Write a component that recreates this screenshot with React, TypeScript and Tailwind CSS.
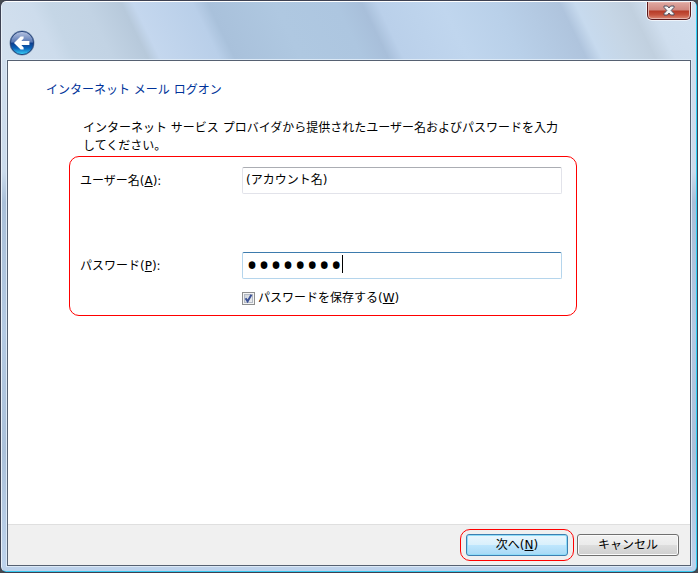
import React, { useState } from "react";

const barGlass =
  "bg-[linear-gradient(64deg,#d3e0ee_0px,#cddcec_50px,#c5d6e6_66px,#c2d3e4_100px,#b7c9db_132px,#c4d7ee_143px,#b9cfe9_196px,#a9c1db_210px,#afc8e1_270px,#adc6e0_325px,#a8bfda_348px,#bad0ea_362px,#c0d6ee_420px,#b9d0e9_468px,#afc4dd_526px,#c7daee_540px,#c6d6e6_565px,#c1d0df_588px,#cfdeee_606px,#d2e1f1_650px)]";

const sideGlass =
  "bg-[linear-gradient(180deg,#d3e0ee_0px,#cbdbec_170px,#aac0d9_200px,#b4cae3_330px,#abc1da_450px,#bdd2eb_560px)]";

const accessKey = "underline decoration-1 underline-offset-1";

function BackButton() {
  return (
    <button type="button" aria-label="戻る" className="size-[26px]">
      <svg viewBox="0 0 26 26" className="size-full">
        <defs>
          <linearGradient id="orb" x1="0" y1="0" x2="0" y2="1">
            <stop offset="0" stopColor="#b9c5e2" />
            <stop offset="0.46" stopColor="#5878b4" />
            <stop offset="0.5" stopColor="#0d3d8c" />
            <stop offset="0.72" stopColor="#0a62b8" />
            <stop offset="1" stopColor="#3bd4fa" />
          </linearGradient>
        </defs>
        <circle cx="13" cy="13" r="12.5" fill="#8298b5" />
        <circle cx="13" cy="13" r="11.6" fill="url(#orb)" stroke="#26457c" strokeWidth="1" />
        <path d="M5 13 L11.6 6.6 L14.6 6.6 L14.6 8.6 L12.3 11.1 L20.4 11.1 L20.4 15 L12.3 15 L14.6 17.4 L14.6 19.6 L11.6 19.6 Z" fill="#fff" />
      </svg>
    </button>
  );
}

function CloseButton() {
  return (
    <button
      type="button"
      aria-label="閉じる"
      className="flex h-[18px] w-11 items-center justify-center rounded-b-[5px] border border-t-0 border-[#5b1a1c] bg-[linear-gradient(180deg,#dfa9a2_0%,#cf8880_48%,#b63a26_52%,#c4513c_75%,#dc8a76_100%)] shadow-[0_0_0_1px_#eef4fb,inset_0_0_0_1px_#e6b3ab]"
    >
      <svg viewBox="0 0 12 11" className="h-[11px] w-3">
        <path
          d="M1 1 H4.4 L6 3 L7.6 1 H11 V2.4 L8.2 5.5 L11 8.6 V10 H7.6 L6 8 L4.4 10 H1 V8.6 L3.8 5.5 L1 2.4 Z"
          fill="#f4f4f4"
          stroke="#4f5060"
          strokeWidth="1"
        />
      </svg>
    </button>
  );
}

export default function App() {
  const [user, setUser] = useState("(アカウント名)");
  const [password, setPassword] = useState("password");
  const [save, setSave] = useState(true);

  return (
    <div className="flex min-h-screen flex-col bg-[#474b50] font-['DejaVu_Sans','Noto_Sans_CJK_JP',sans-serif] text-[12px] leading-[18px] text-black">
      <div className="flex grow flex-col overflow-hidden rounded-[6px] border border-[#3d4152]">
        <div
          className={`flex grow flex-col rounded-[5px] border border-t-white border-r-[#2fd0f5] border-b-[#35c8ee] border-l-[#e8f0f8] ${sideGlass}`}
        >
          <header className={`flex h-[58px] items-start justify-between rounded-t-[4px] pr-[5px] pl-[7px] ${barGlass}`}>
            <div className="pt-7">
              <BackButton />
            </div>
            <CloseButton />
          </header>

          <form
            className="mx-[5px] mb-[5px] flex grow flex-col border border-[#566172] bg-white shadow-[0_0_0_1px_#dce9f6]"
            onSubmit={(e) => e.preventDefault()}
          >
            <main className="grow pt-5 pr-4 pb-4">
              <h1 className="pl-[38px] text-[#003399]">インターネット メール ログオン</h1>
              <p className="mt-5 max-w-[555px] pl-[75px]">
                インターネット サービス プロバイダから提供されたユーザー名およびパスワードを入力してください。
              </p>

              <div className="mt-px ml-[61px] max-w-[508px] rounded-[10px] border border-[#ff0000] pt-[10px] pr-[14px] pb-2 pl-[10px]">
                <div className="flex items-center">
                  <label htmlFor="user" className="w-[162px] shrink-0">
                    ユーザー名(<span className={accessKey}>A</span>):
                  </label>
                  <input
                    id="user"
                    type="text"
                    value={user}
                    onChange={(e) => setUser(e.target.value)}
                    className="h-[27px] min-w-0 grow rounded-[2px] border border-[#e2e3ea] border-t-[#abadb3] bg-white px-[3px] pb-1 outline-none"
                  />
                </div>

                <div className="mt-[58px] flex items-center">
                  <label htmlFor="password" className="w-[162px] shrink-0">
                    パスワード(<span className={accessKey}>P</span>):
                  </label>
                  <div className="relative min-w-0 grow">
                    <input
                      id="password"
                      type="password"
                      value={password}
                      onChange={(e) => setPassword(e.target.value)}
                      className="block h-[27px] w-full rounded-[2px] border border-[#b5d5ec] border-t-[#3d7bad] bg-white px-[3px] pb-[2px] font-['Open_Sans',sans-serif] text-[32px] leading-[24px] caret-transparent outline-none"
                    />
                    <span className="absolute top-[3px] left-[100px] h-[18px] w-px bg-black" />
                  </div>
                </div>

                <div className="mt-[10px] ml-[162px] flex items-center gap-[3px]">
                  <span className="relative size-[13px]">
                    <input
                      id="save"
                      type="checkbox"
                      checked={save}
                      onChange={(e) => setSave(e.target.checked)}
                      className="block size-[13px] appearance-none border border-[#8e8f8f] bg-[linear-gradient(135deg,#c8cdd5,#f4f5f6)] shadow-[inset_0_0_0_1px_#f4f4f4,inset_0_0_0_2px_#b4bac4]"
                    />
                    {save && (
                      <svg viewBox="0 0 13 13" className="pointer-events-none absolute inset-0 size-[13px]">
                        <path d="M3.6 6.2 L5.6 9.4 L9.4 2.8" fill="none" stroke="#3c5296" strokeWidth="2" />
                      </svg>
                    )}
                  </span>
                  <label htmlFor="save">
                    パスワードを保存する(<span className={accessKey}>W</span>)
                  </label>
                </div>
              </div>
            </main>

            <footer className="flex h-[41px] items-center justify-end gap-[3px] border-t border-[#dfdfdf] bg-[#f0f0f0] pr-[11px]">
              <div className="rounded-[10px] border border-[#ff0000] px-[5px] py-1">
                <button
                  type="submit"
                  className="block h-[22px] w-[102px] rounded-[3px] border border-[#3c7fb1] bg-[linear-gradient(180deg,#eaf6fd_0%,#d9f0fc_49%,#bee6fd_51%,#a7d9f5_100%)] leading-[20px] shadow-[inset_0_0_0_1px_#8fdcf8]"
                >
                  次へ(<span className={accessKey}>N</span>)
                </button>
              </div>
              <button
                type="button"
                className="h-[22px] w-[102px] rounded-[3px] border border-[#707070] bg-[linear-gradient(180deg,#f2f2f2_0%,#ebebeb_49%,#dddddd_51%,#cfcfcf_100%)] leading-[20px] shadow-[inset_0_0_0_1px_#fbfbfb]"
              >
                キャンセル
              </button>
            </footer>
          </form>
        </div>
      </div>
    </div>
  );
}
